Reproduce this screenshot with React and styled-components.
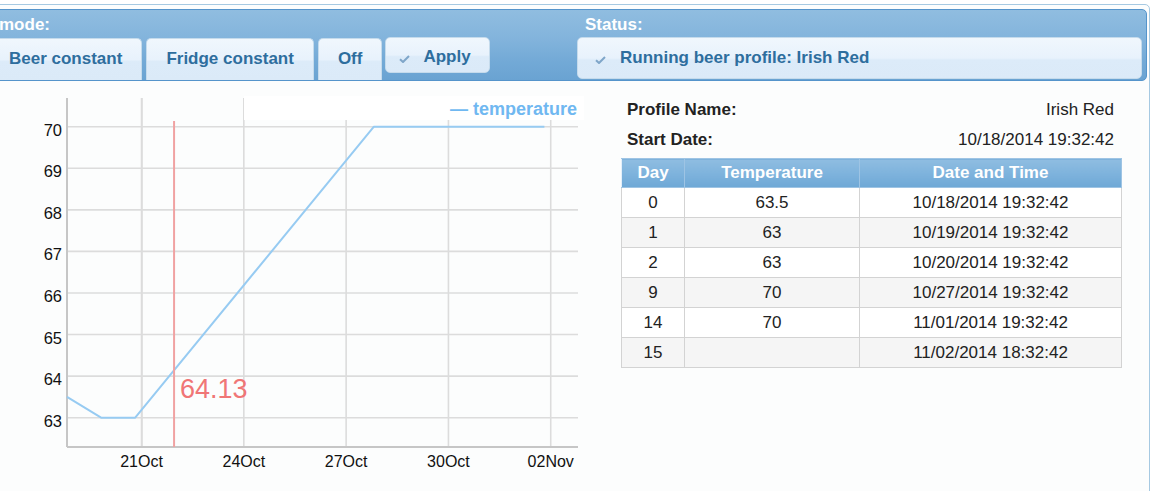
import React from 'react';
import styled, { createGlobalStyle } from 'styled-components';

const GlobalStyle = createGlobalStyle`
  html, body {
    margin: 0;
    padding: 0;
    background: #fff;
    overflow: hidden;
  }
  body {
    font-family: "Liberation Sans", Arial, sans-serif;
    color: #222;
  }
`;

// chart scales (page pixels)
const X0 = 67;
const PX_PER_DAY = 34.1;
const xOf = (day) => X0 + day * PX_PER_DAY;
const yOf = (temp) => 126.7 + (70 - temp) * 41.57;

const profile = [
  { day: 0, temp: 63.5, date: '10/18/2014 19:32:42' },
  { day: 1, temp: 63, date: '10/19/2014 19:32:42' },
  { day: 2, temp: 63, date: '10/20/2014 19:32:42' },
  { day: 9, temp: 70, date: '10/27/2014 19:32:42' },
  { day: 14, temp: 70, date: '11/01/2014 19:32:42' },
  { day: 15, temp: null, date: '11/02/2014 18:32:42' },
];

const yTicks = [70, 69, 68, 67, 66, 65, 64, 63];
const xTicks = [
  { label: '21Oct', day: 2.1856 },
  { label: '24Oct', day: 5.1856 },
  { label: '27Oct', day: 8.1856 },
  { label: '30Oct', day: 11.1856 },
  { label: '02Nov', day: 14.1856 },
];
const nowDay = 3.14;

const Widget = styled.div`
  box-sizing: border-box;
  width: 1170px;
  min-height: 520px;
  margin: 4px 0 0 -20px;
  padding: 4px 2px 0 4px;
  border: 1px solid #a6c9e2;
  border-radius: 5px;
  background: #fcfdfd;
`;

const Header = styled.div`
  display: flex;
  box-sizing: border-box;
  height: 72px;
  border: 1px solid #5594cb;
  border-radius: 5px;
  background: linear-gradient(180deg, #90bde0 0%, #83b4dc 40%, #72a9d6 75%, #6aa3d2 100%);
`;

const ModeSection = styled.div`
  width: 587px;
  flex: none;
`;

const StatusSection = styled.div`
  flex: 1;
  margin-left: 4px;
  padding-right: 4px;
`;

const SectionLabel = styled.div`
  box-sizing: border-box;
  height: 28px;
  padding: 5px 0 0 ${(p) => p.$indent}px;
  line-height: 20px;
  font-size: 17px;
  font-weight: bold;
  color: #fff;
  white-space: nowrap;
`;

const TabRow = styled.div`
  display: flex;
  align-items: flex-start;
  gap: 4px;
  padding-left: 3px;
`;

const lightFill = `linear-gradient(180deg, #f0f7fd 0%, #e8f2fc 50%, #dcebf9 55%, #dbeaf8 100%)`;

const Tab = styled.button`
  display: flex;
  align-items: flex-start;
  box-sizing: border-box;
  height: 42px;
  margin: 0;
  padding: 10px 19px 0;
  border: 1px solid #c5dbec;
  border-bottom: none;
  border-radius: 5px 5px 0 0;
  background: ${lightFill};
  color: #2e6e9e;
  font-family: inherit;
  font-size: 17px;
  font-weight: bold;
  line-height: 20px;
  white-space: nowrap;
  cursor: pointer;
`;

const ApplyButton = styled.button`
  display: flex;
  align-items: flex-start;
  gap: 13px;
  box-sizing: border-box;
  height: 36px;
  margin: -1px 0 0 -1px;
  padding: 9px 18px 0 13px;
  border: 1px solid #c5dbec;
  border-radius: 5px;
  background: ${lightFill};
  color: #2e6e9e;
  font-family: inherit;
  font-size: 17px;
  font-weight: bold;
  line-height: 20px;
  cursor: pointer;
`;

const StatusBox = styled.div`
  display: flex;
  align-items: flex-start;
  gap: 14px;
  box-sizing: border-box;
  height: 42px;
  margin-top: -1px;
  padding: 10px 17px 0;
  border: 1px solid #c5dbec;
  border-radius: 5px;
  background: ${lightFill};
  color: #2e6e9e;
  font-size: 17px;
  font-weight: bold;
  line-height: 20px;
`;

const CheckSvg = styled.svg`
  flex: none;
  margin-top: 8px;
`;

const Content = styled.div`
  display: flex;
  align-items: flex-start;
  padding: 9px 0 0 15px;
`;

const ChartSvg = styled.svg`
  display: block;
  flex: none;
  font-family: "Liberation Sans", Arial, sans-serif;
`;

const ProfilePanel = styled.div`
  width: 500px;
  margin-left: 21px;
  padding-top: 5px;
`;

const InfoRow = styled.div`
  display: flex;
  justify-content: space-between;
  height: 30px;
  padding: 0 7px 0 6px;
  line-height: 30px;
  font-size: 17px;
`;

const InfoLabel = styled.span`
  font-weight: bold;
`;

const ProfileTable = styled.table`
  width: 500px;
  margin-top: 3px;
  border-collapse: collapse;
  table-layout: fixed;
  font-size: 17px;

  th {
    height: 28px;
    padding: 0;
    border: 1px solid #9ec4e4;
    border-left-color: #e4effa;
    background: linear-gradient(180deg, #8fbde1 0%, #80b4dd 45%, #6ea8d6 100%);
    color: #fff;
    font-weight: bold;
  }

  td {
    height: 29px;
    padding: 0;
    border: 1px solid #d3d3d3;
    text-align: center;
    background: #fff;
  }

  tbody tr:nth-child(even) td {
    background: #f5f5f5;
  }
`;

function Check() {
  return (
    <CheckSvg width="11" height="8" viewBox="0 0 11 8">
      <path d="M1 4.2 L4 7 L10 1" fill="none" stroke="#7fa6c9" strokeWidth="2" strokeLinejoin="round" />
    </CheckSvg>
  );
}

function TemperatureChart() {
  const points = profile
    .filter((p) => p.temp !== null)
    .map((p) => `${xOf(p.day).toFixed(1)},${yOf(p.temp).toFixed(1)}`)
    .join(' ');

  const nowX = xOf(nowDay);

  return (
    <ChartSvg width="600" height="395" viewBox="0 90 600 395">
      {yTicks.map((t) => (
        <line key={t} x1={X0} x2="578" y1={yOf(t)} y2={yOf(t)} stroke="#dcdcdc" strokeWidth="1.6" />
      ))}
      <line x1="142" x2="142" y1="98" y2="447" stroke="#dcdcdc" strokeWidth="1.6" />
      {xTicks.map((t) => (
        <line key={t.label} x1={xOf(t.day)} x2={xOf(t.day)} y1="98" y2="447" stroke="#dcdcdc" strokeWidth="1.6" />
      ))}
      <rect x="244" y="96" width="340" height="24" fill="#ffffff" />

      <line x1={X0} x2={X0} y1="98" y2="447" stroke="#c6c6c6" strokeWidth="2" />
      <line x1={X0} x2="578" y1="447" y2="447" stroke="#c6c6c6" strokeWidth="2" />

      {yTicks.map((t) => (
        <text key={t} x="62" y={yOf(t) + 9} textAnchor="end" fontSize="16.5" fill="#111">
          {t}
        </text>
      ))}
      {xTicks.map((t) => (
        <text key={t.label} x={xOf(t.day)} y="467" textAnchor="middle" fontSize="16" fill="#111">
          {t.label}
        </text>
      ))}

      <polyline points={points} fill="none" stroke="#97cbf2" strokeWidth="2" strokeLinejoin="round" />

      <line x1={nowX} x2={nowX} y1="121" y2="447" stroke="#f0a2a2" strokeWidth="2" />
      <text x={nowX + 6} y="398" fontSize="27" fill="#f07676">
        64.13
      </text>

      <text x="577" y="115" textAnchor="end" fontSize="18" fontWeight="bold" fill="#70b8f1">
        — temperature
      </text>
    </ChartSvg>
  );
}

function App() {
  return (
    <>
      <GlobalStyle />
      <Widget>
        <Header>
          <ModeSection>
            <SectionLabel $indent={13}>mode:</SectionLabel>
            <TabRow>
              <Tab>Beer constant</Tab>
              <Tab>Fridge constant</Tab>
              <Tab>Off</Tab>
              <ApplyButton>
                <Check />
                Apply
              </ApplyButton>
            </TabRow>
          </ModeSection>
          <StatusSection>
            <SectionLabel $indent={8}>Status:</SectionLabel>
            <StatusBox>
              <Check />
              Running beer profile: Irish Red
            </StatusBox>
          </StatusSection>
        </Header>

        <Content>
          <TemperatureChart />
          <ProfilePanel>
            <InfoRow>
              <InfoLabel>Profile Name:</InfoLabel>
              <span>Irish Red</span>
            </InfoRow>
            <InfoRow>
              <InfoLabel>Start Date:</InfoLabel>
              <span>10/18/2014 19:32:42</span>
            </InfoRow>
            <ProfileTable>
              <colgroup>
                <col style={{ width: 63 }} />
                <col style={{ width: 175 }} />
                <col style={{ width: 262 }} />
              </colgroup>
              <thead>
                <tr>
                  <th>Day</th>
                  <th>Temperature</th>
                  <th>Date and Time</th>
                </tr>
              </thead>
              <tbody>
                {profile.map((row) => (
                  <tr key={row.day}>
                    <td>{row.day}</td>
                    <td>{row.temp === null ? '' : row.temp}</td>
                    <td>{row.date}</td>
                  </tr>
                ))}
              </tbody>
            </ProfileTable>
          </ProfilePanel>
        </Content>
      </Widget>
    </>
  );
}

export default App;
